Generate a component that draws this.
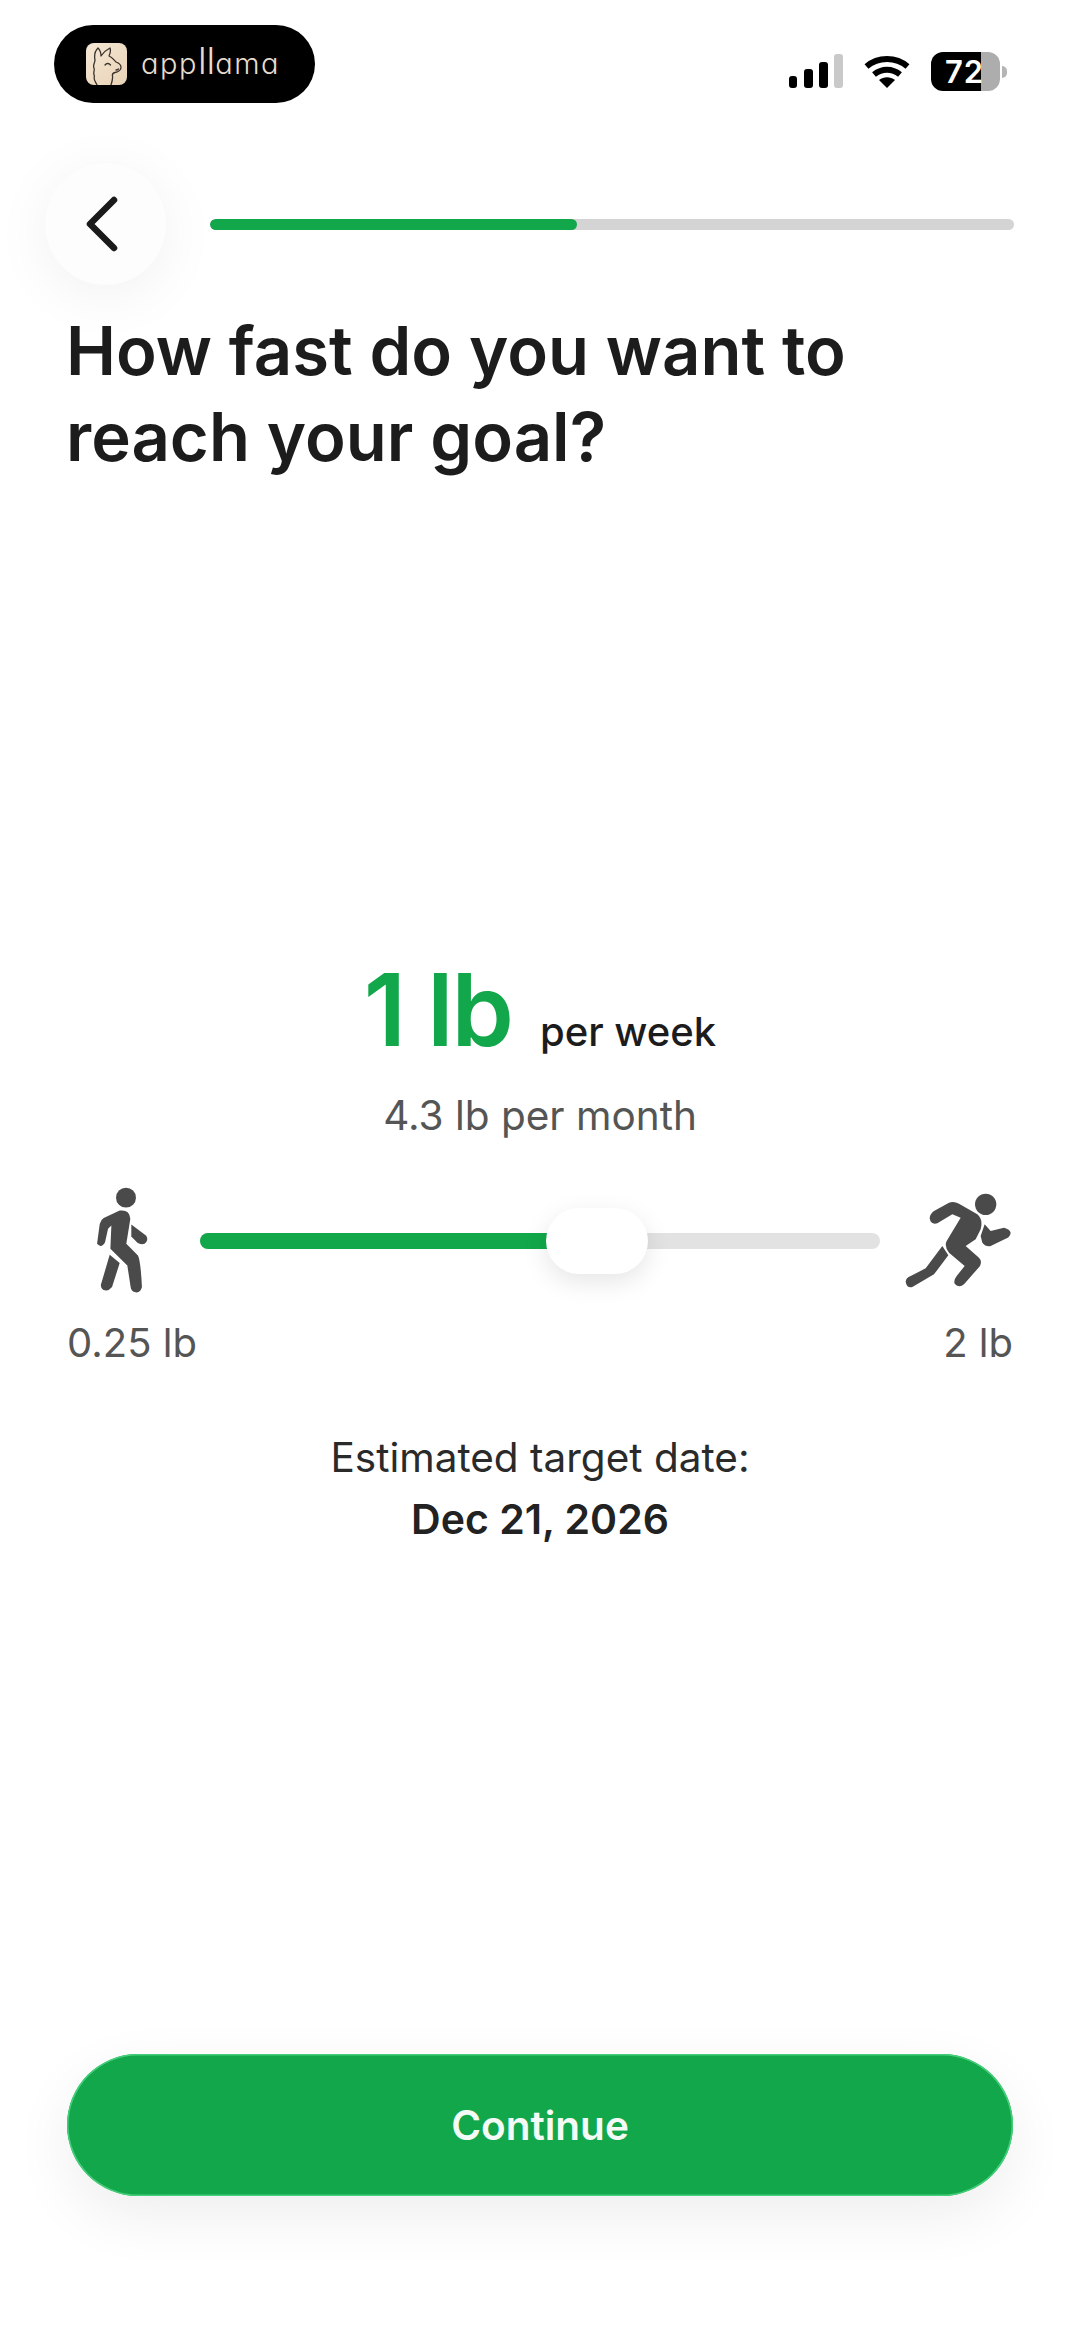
<script>
  const title = ['How fast do you want to', 'reach your goal?'];
</script>

<div class="app">
  <div class="status">
    <div class="pill">
      <svg class="llama" viewBox="0 0 41 42" aria-hidden="true">
        <defs>
          <linearGradient id="lg" x1="0" y1="0" x2="1" y2="1">
            <stop offset="0" stop-color="#f6e8d6" />
            <stop offset="1" stop-color="#e8d2b6" />
          </linearGradient>
        </defs>
        <rect width="41" height="42" rx="8" fill="url(#lg)" />
        <path d="M11 42C9 38 7 36 8.500 33 6.500 30 9 28 8 25 6.500 22 9 20 9 17 8 12 9 8 12 5 14 7 15 10 15 13 17 10 20 7 24 5 25 8 24 11 23 13 26 14 28 17 30 19 33 20 35 22 35 24.500 35 27 32 29 29 29.500 27 30 26 31 26.500 33 27 36 26 39 25 42" fill="none" stroke="#3b332b" stroke-width="1.3" stroke-linecap="round" stroke-linejoin="round" />
        <path d="M19 22c1.500-2 4-2 5.500 0M30 27c1 0 2-.5 2.500-1" fill="none" stroke="#3b332b" stroke-width="1.3" stroke-linecap="round" />
      </svg>
      <span class="brand">app<span class="ll">ll</span>ama</span>
    </div>
    <div class="indicators">
      <svg class="signal" viewBox="0 0 54 34" aria-hidden="true">
        <rect x="0" y="22" width="8" height="12" rx="3" fill="#000" />
        <rect x="15" y="15" width="9" height="19" rx="3" fill="#000" />
        <rect x="30" y="8" width="9" height="26" rx="3" fill="#000" />
        <rect x="45" y="0" width="9" height="34" rx="3" fill="#c9c9c9" />
      </svg>
      <svg class="wifi" viewBox="0 0 46 33" aria-hidden="true">
        <path d="M2.500 11.500C14 1.500 32 1.500 43.500 11.500" fill="none" stroke="#000" stroke-width="6" />
        <path d="M10 19.500c8-6.500 18-6.500 26 0" fill="none" stroke="#000" stroke-width="6" />
        <path d="M23 33l-8-8c5-3.600 11-3.600 16 0z" fill="#000" />
      </svg>
      <div class="battery">
        <div class="cell"><span>72</span></div>
        <div class="nub"></div>
      </div>
    </div>
  </div>

  <div class="header">
    <button class="back" aria-label="Back">
      <svg viewBox="0 0 34 56" aria-hidden="true">
        <path d="M29 4 5 28l24 24" fill="none" stroke="#1a1a1a" stroke-width="6.500" stroke-linecap="round" stroke-linejoin="round" />
      </svg>
    </button>
    <div class="progress"><div class="progress-fill"></div></div>
  </div>

  <h1>{title[0]}<br />{title[1]}</h1>

  <div class="rate">
    <span class="value">1 lb</span>
    <span class="unit">per week</span>
  </div>
  <p class="month">4.3 lb per month</p>

  <div class="slider-row">
    <svg class="walk" viewBox="190 70 180 340" aria-hidden="true">
      <circle cx="289" cy="111" r="30" />
      <path d="M270 150Q300 146 302 175L290 250 325 285Q333 300 337 380 333 398 318 396 305 395 303 380L293 315 242 265 245 195 235 205 226 245Q215 265 202 250L210 190Q212 178 222 172Z" />
      <path d="M240 283 270 308 247 380Q235 395 220 388 210 380 215 368Z" />
      <path d="M305 192 350 226Q358 240 345 250 332 254 322 245L305 228Z" />
    </svg>
    <div class="track">
      <div class="track-fill"></div>
      <div class="thumb"></div>
    </div>
    <svg class="run" viewBox="70 90 330 300" aria-hidden="true">
      <circle cx="315" cy="130" r="32" />
      <path d="M160 150 205 125Q220 120 235 128L290 160Q308 175 300 205L285 235 255 255 295 290Q305 300 298 315L250 370Q235 382 222 368 218 358 228 345L252 315 205 275Q190 255 198 240L240 170 215 160 170 187Q150 192 147 172 148 158 160 150Z" />
      <path d="M185 255 203 283 160 340 95 378Q78 382 75 362 76 350 90 345L135 322Z" />
      <path d="M312 190 330 210 370 200Q388 205 390 215 388 228 378 232L330 255Q315 258 305 245L300 225Z" />
    </svg>
  </div>

  <div class="ends">
    <span>0.25 lb</span>
    <span>2 lb</span>
  </div>

  <p class="target">Estimated target date:</p>
  <p class="date">Dec 21, 2026</p>

  <button class="cta">Continue</button>
</div>

<style>
  :global(body) {
    margin: 0;
    background: #fff;
  }
  .app {
    width: 1080px;
    height: 2336px;
    display: flex;
    flex-direction: column;
    box-sizing: border-box;
    overflow: hidden;
    font-family: Inter, "Liberation Sans", sans-serif;
    color: #1c1c1c;
    background: #fff;
  }
  .status {
    display: flex;
    justify-content: space-between;
    align-items: flex-start;
    padding: 25px 73px 0 54px;
    height: 103px;
    box-sizing: border-box;
  }
  .pill {
    width: 261px;
    height: 78px;
    border-radius: 39px;
    background: #000;
    display: flex;
    align-items: center;
    gap: 14px;
    padding-left: 32px;
    box-sizing: border-box;
  }
  .llama {
    width: 41px;
    height: 42px;
    flex: none;
  }
  .brand {
    font-size: 29px;
    font-weight: 300;
    color: #e6dccd;
    font-feature-settings: "cv11";
    letter-spacing: 1.5px;
    line-height: 40px;
    white-space: nowrap;
  }
  .ll {
    font-size: 37px;
    line-height: 1px;
    letter-spacing: 0;
  }
  .indicators {
    display: flex;
    align-items: flex-start;
    padding-top: 29px;
  }
  .signal {
    width: 54px;
    height: 34px;
    margin-right: 21px;
  }
  .wifi {
    width: 46px;
    height: 33px;
    margin-right: 21px;
    margin-top: 1px;
  }
  .battery {
    display: flex;
    align-items: center;
    margin-top: -2px;
  }
  .cell {
    width: 69px;
    height: 39px;
    border-radius: 12px;
    background: linear-gradient(to right, #000 72%, #adadad 72%);
    display: flex;
    align-items: center;
    padding-left: 14px;
    box-sizing: border-box;
  }
  .cell span {
    color: #fff;
    font-size: 31px;
    font-weight: 600;
    letter-spacing: 1px;
    line-height: 1;
  }
  .nub {
    width: 5px;
    height: 12px;
    margin-left: 2px;
    background: #b5b5b5;
    border-radius: 0 6px 6px 0;
  }
  .header {
    display: flex;
    align-items: center;
    margin-top: 60px;
    padding: 0 66px 0 45px;
    gap: 44px;
  }
  .back {
    width: 121px;
    height: 122px;
    border-radius: 50%;
    border: 0;
    padding: 0 8px 0 0;
    background: #fdfdfd;
    box-shadow: 0 10px 60px rgba(0, 0, 0, 0.06);
    display: flex;
    align-items: center;
    justify-content: center;
    flex: none;
  }
  .back svg {
    width: 34px;
    height: 56px;
  }
  .progress {
    flex: 1;
    height: 11px;
    border-radius: 6px;
    background: #d4d4d4;
    overflow: hidden;
  }
  .progress-fill {
    width: 367px;
    height: 100%;
    border-radius: 6px;
    background: #12a74a;
  }
  h1 {
    margin: 23px 0 0;
    padding: 0 67px 0 66px;
    font-size: 67px;
    line-height: 86px;
    font-weight: 600;
    color: #1c1c1c;
  }
  .rate {
    display: flex;
    justify-content: center;
    align-items: baseline;
    gap: 28px;
    margin-top: 470px;
    height: 120px;
  }
  .value {
    font-size: 100px;
    line-height: 120px;
    font-weight: 600;
    color: #12a74a;
    letter-spacing: -2px;
  }
  .unit {
    font-size: 40px;
    font-weight: 500;
    color: #1c1c1c;
  }
  p {
    margin: 0;
    text-align: center;
  }
  .month {
    margin-top: 23px;
    font-size: 40.500px;
    line-height: 46px;
    color: #555;
  }
  .slider-row {
    display: flex;
    align-items: center;
    margin-top: 45px;
    padding: 0 66px 0 93px;
    height: 113px;
  }
  .walk {
    width: 60px;
    height: 113px;
    fill: #4a4a4a;
    flex: none;
  }
  .run {
    width: 110px;
    height: 100px;
    fill: #4a4a4a;
    flex: none;
    margin-left: 24px;
  }
  .track {
    position: relative;
    flex: 1;
    height: 16px;
    margin-left: 47px;
    border-radius: 8px;
    background: #e2e2e2;
  }
  .track-fill {
    width: 352px;
    height: 100%;
    border-radius: 8px 0 0 8px;
    background: #12a74a;
  }
  .thumb {
    position: absolute;
    left: 346px;
    top: -25px;
    width: 102px;
    height: 66px;
    border-radius: 33px;
    background: #fff;
    box-shadow: 0 8px 26px rgba(0, 0, 0, 0.1);
  }
  .ends {
    display: flex;
    justify-content: space-between;
    padding: 0 67px;
    margin-top: 23px;
    font-size: 40px;
    line-height: 46px;
    color: #555;
  }
  .target {
    margin-top: 69px;
    font-size: 40.500px;
    line-height: 46px;
    color: #2a2a2a;
  }
  .date {
    margin-top: 15px;
    font-size: 41px;
    line-height: 46px;
    font-weight: 600;
    color: #222;
  }
  .cta {
    margin: auto 67px 140px;
    height: 142px;
    border: 0;
    border-radius: 71px;
    background: #12a74a;
    color: #f4fbf6;
    font-family: inherit;
    font-size: 40.500px;
    font-weight: 600;
    box-shadow: inset 0 0 0 1.500px #45cf7a, 0 20px 60px rgba(0, 0, 0, 0.07);
  }
</style>
